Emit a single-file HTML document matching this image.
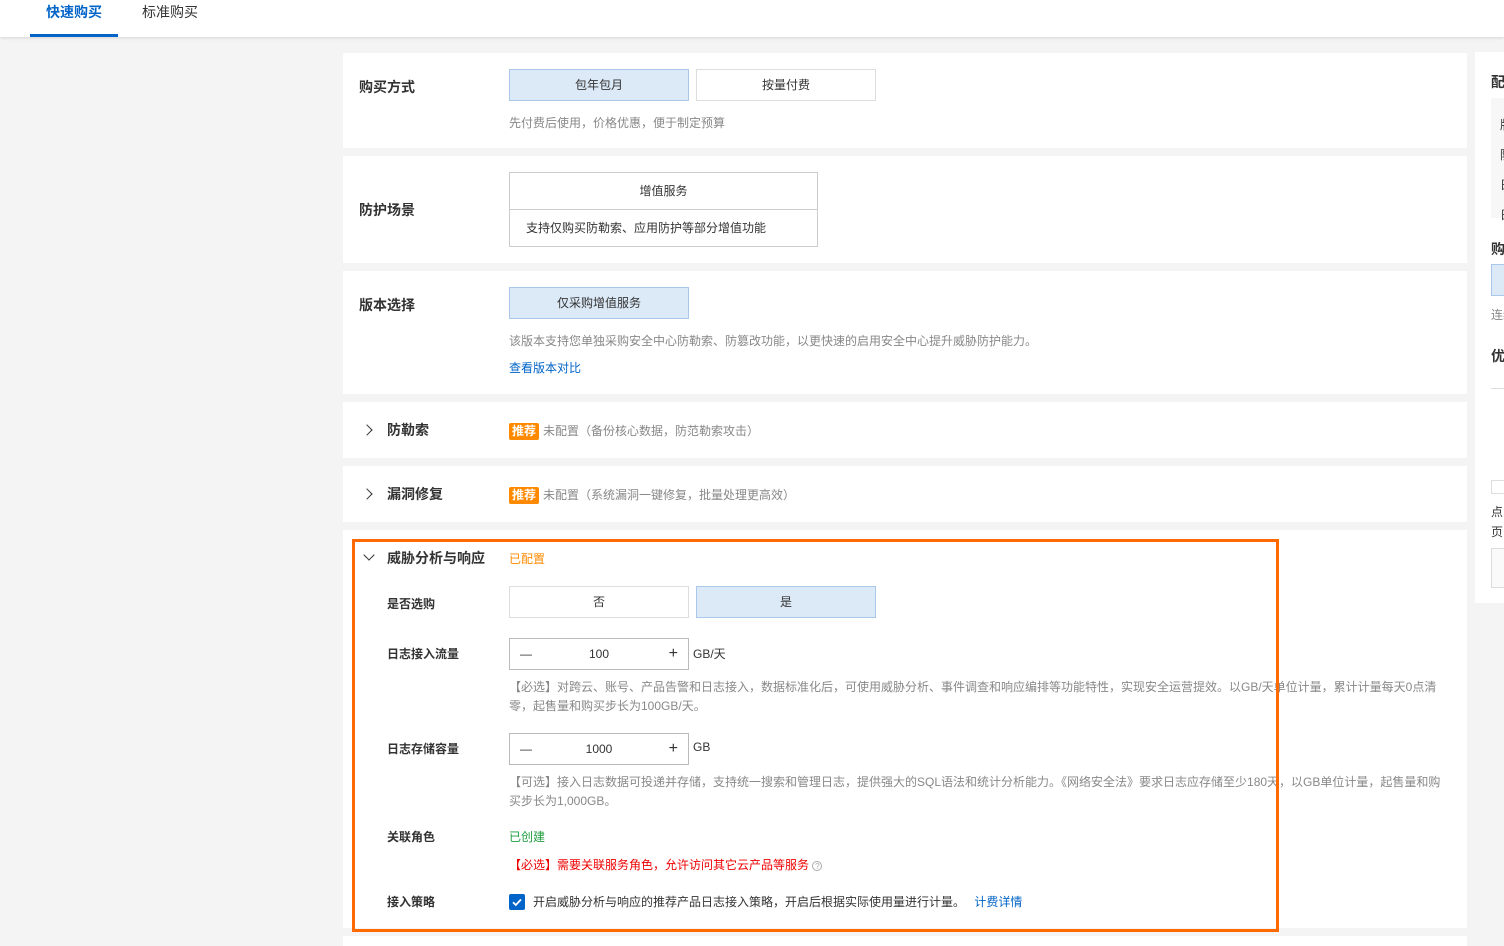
<!DOCTYPE html>
<html><head><meta charset="utf-8"><style>
*{margin:0;padding:0;box-sizing:border-box}
body{width:1504px;height:942px;overflow:hidden;background:#f4f4f4;font-family:"Liberation Sans","Noto Sans CJK SC",sans-serif;font-size:12px;color:#333;position:relative}
.a{position:absolute}
.top{left:0;top:0;width:1504px;height:37px;background:#fff;box-shadow:0 1px 3px rgba(0,0,0,.12)}
.card{position:absolute;left:343px;width:1124px;background:#fff}
.lbl{position:absolute;font-size:14px;font-weight:bold;color:#333}
.sub{position:absolute;font-size:12px;font-weight:bold;color:#333}
.btn{position:absolute;height:32px;border:1px solid #ddd;background:#fff;text-align:center;line-height:30px;font-size:12px;color:#333}
.sel{background:#dce9f7;border-color:#a9c8ea}
.g{position:absolute;color:#888;font-size:12px}
.tag{display:inline-block;background:#ff8a00;color:#fff;font-weight:bold;padding:0 3px;height:17px;line-height:17px;margin-right:4px;border-radius:2px}
.chev{position:absolute;width:8px;height:8px;border-right:1.5px solid #333;border-bottom:1.5px solid #333}
.rp div{white-space:nowrap}
</style></head><body>
<div class="a top">
 <div class="a" style="left:46px;top:2px;font-size:14px;font-weight:bold;color:#0064c8">快速购买</div>
 <div class="a" style="left:30px;top:34px;width:88px;height:3px;background:#0064c8"></div>
 <div class="a" style="left:142px;top:2px;font-size:14px;color:#333">标准购买</div>
</div>

<div class="card" style="top:53px;height:95px">
 <div class="lbl" style="left:16px;top:24px">购买方式</div>
 <div class="btn sel" style="left:166px;top:16px;width:180px">包年包月</div>
 <div class="btn" style="left:353px;top:16px;width:180px">按量付费</div>
 <div class="g" style="left:166px;top:61px">先付费后使用，价格优惠，便于制定预算</div>
</div>

<div class="card" style="top:156px;height:107px">
 <div class="lbl" style="left:16px;top:44px">防护场景</div>
 <div class="a" style="left:166px;top:16px;width:309px;height:75px;border:1px solid #ccc">
  <div style="height:37px;line-height:36px;text-align:center;border-bottom:1px solid #ccc">增值服务</div>
  <div style="line-height:36px;padding-left:16px">支持仅购买防勒索、应用防护等部分增值功能</div>
 </div>
</div>

<div class="card" style="top:271px;height:123px">
 <div class="lbl" style="left:16px;top:24px">版本选择</div>
 <div class="btn sel" style="left:166px;top:16px;width:180px">仅采购增值服务</div>
 <div class="g" style="left:166px;top:61px">该版本支持您单独采购安全中心防勒索、防篡改功能，以更快速的启用安全中心提升威胁防护能力。</div>
 <div class="a" style="left:166px;top:88px;color:#0064c8">查看版本对比</div>
</div>

<div class="card" style="top:402px;height:56px">
 <div class="chev" style="left:20px;top:24px;transform:rotate(-45deg)"></div>
 <div class="lbl" style="left:44px;top:18px">防勒索</div>
 <div class="g" style="left:166px;top:20px"><span class="tag">推荐</span>未配置（备份核心数据，防范勒索攻击）</div>
</div>

<div class="card" style="top:466px;height:56px">
 <div class="chev" style="left:20px;top:24px;transform:rotate(-45deg)"></div>
 <div class="lbl" style="left:44px;top:18px">漏洞修复</div>
 <div class="g" style="left:166px;top:20px"><span class="tag">推荐</span>未配置（系统漏洞一键修复，批量处理更高效）</div>
</div>

<div class="card" style="top:530px;height:398px">
 <div class="chev" style="left:22px;top:21px;transform:rotate(45deg)"></div>
 <div class="lbl" style="left:44px;top:18px">威胁分析与响应</div>
 <div class="a" style="left:166px;top:20px;color:#ff8a00">已配置</div>
 <div class="sub" style="left:44px;top:65px">是否选购</div>
 <div class="btn" style="left:166px;top:56px;width:180px">否</div>
 <div class="btn sel" style="left:353px;top:56px;width:180px">是</div>
 <div class="sub" style="left:44px;top:115px">日志接入流量</div>
 <div class="btn" style="left:166px;top:108px;width:180px;border-color:#bbb">100<span class="a" style="left:10px;top:0">—</span><span class="a" style="right:10px;top:0;font-size:16px">+</span></div>
 <div class="a" style="left:350px;top:115px">GB/天</div>
 <div class="g" style="left:166px;top:148px;width:940px;line-height:19px">【必选】对跨云、账号、产品告警和日志接入，数据标准化后，可使用威胁分析、事件调查和响应编排等功能特性，实现安全运营提效。以GB/天单位计量，累计计量每天0点清零，起售量和购买步长为100GB/天。</div>
 <div class="sub" style="left:44px;top:210px">日志存储容量</div>
 <div class="btn" style="left:166px;top:203px;width:180px;border-color:#bbb">1000<span class="a" style="left:10px;top:0">—</span><span class="a" style="right:10px;top:0;font-size:16px">+</span></div>
 <div class="a" style="left:350px;top:210px">GB</div>
 <div class="g" style="left:166px;top:243px;width:940px;line-height:19px">【可选】接入日志数据可投递并存储，支持统一搜索和管理日志，提供强大的SQL语法和统计分析能力。《网络安全法》要求日志应存储至少180天，以GB单位计量，起售量和购买步长为1,000GB。</div>
 <div class="sub" style="left:44px;top:298px">关联角色</div>
 <div class="a" style="left:166px;top:298px;color:#1e9e3e">已创建</div>
 <div class="a" style="left:166px;top:326px;color:#e00">【必选】需要关联服务角色，允许访问其它云产品等服务 <span style="display:inline-block;width:10px;height:10px;border:1px solid #aaa;border-radius:50%;font-size:8px;line-height:9px;text-align:center;color:#aaa">?</span></div>
 <div class="sub" style="left:44px;top:363px">接入策略</div>
 <div class="a" style="left:166px;top:364px;width:16px;height:16px;background:#0064c8;border-radius:2px"><svg width="16" height="16" viewBox="0 0 16 16"><path d="M4 8.2l2.8 2.8L12 5.5" stroke="#fff" stroke-width="1.8" fill="none"/></svg></div>
 <div class="a" style="left:190px;top:363px">开启威胁分析与响应的推荐产品日志接入策略，开启后根据实际使用量进行计量。 <span style="color:#0064c8;margin-left:6px">计费详情</span></div>
</div>
<div class="card" style="top:936px;height:10px"></div>

<div class="a" style="left:352px;top:539px;width:927px;height:393px;border:3px solid #ff6a00"></div>

<div class="a rp" style="left:1475px;top:52px;width:29px;height:551px;background:#fff;overflow:hidden">
 <div class="a" style="left:16px;top:20px;font-size:14px;font-weight:bold">配置</div>
 <div class="a" style="left:16px;top:46px;width:13px;height:120px;background:#f7f7f7">
  <div class="a" style="left:9px;top:12px;line-height:30px;white-space:normal">版<br>防<br>日<br>日</div>
 </div>
 <div class="a" style="left:16px;top:187px;font-size:14px;font-weight:bold">购买</div>
 <div class="a" style="left:16px;top:212px;width:13px;height:32px;background:#dce9f7;border:1px solid #a9c8ea;border-right:none"></div>
 <div class="a" style="left:16px;top:254px;color:#888">连续</div>
 <div class="a" style="left:16px;top:294px;font-size:14px;font-weight:bold">优惠</div>
 <div class="a" style="left:16px;top:336px;width:13px;height:1px;background:#ddd"></div>
 <div class="a" style="left:16px;top:428px;width:13px;height:14px;border:1px solid #ddd;border-right:none"></div>
 <div class="a" style="left:16px;top:450px;line-height:20px;white-space:normal">点<br>页</div>
 <div class="a" style="left:16px;top:496px;width:13px;height:40px;border:1px solid #ddd;border-right:none;background:#fafafa"></div>
</div>
</body></html>
